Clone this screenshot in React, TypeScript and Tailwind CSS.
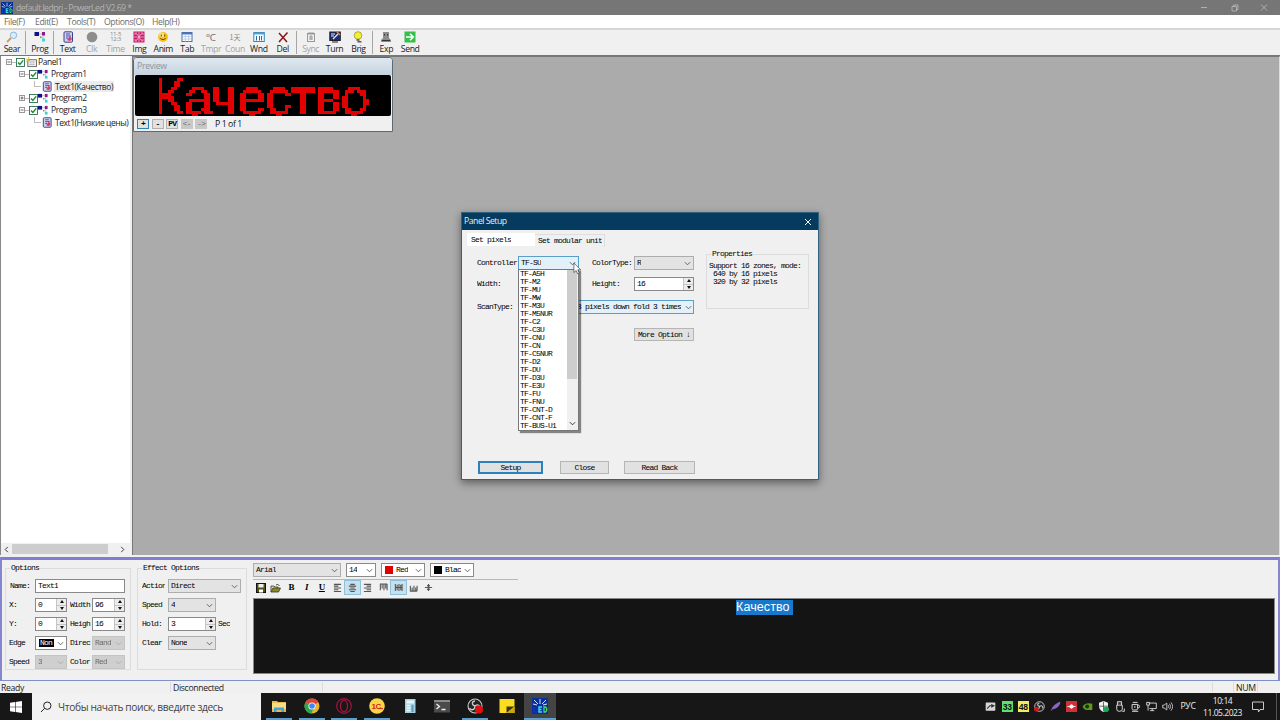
import { ReactNode } from "react";
import clsx from "clsx";

const mono = "font-['Liberation_Mono',monospace] text-[8px] leading-[8px] tracking-[-0.8px] whitespace-pre text-black";
const ui = "font-['Open_Sans','Noto_Sans',sans-serif] tracking-[-0.450px]";

function Chevron({ className = "text-[#555]" }: { className?: string }) {
  return (
    <svg viewBox="0 0 8 5" className={clsx("h-[5px] w-[7px] shrink-0", className)} fill="none" stroke="currentColor">
      <path d="M1 1l3 3 3-3" />
    </svg>
  );
}

function Select({ value, className, tone = "gray" }: { value: ReactNode; className: string; tone?: "gray" | "white" | "blue" | "off" }) {
  return (
    <div
      className={clsx(
        "flex h-[14px] shrink-0 items-center justify-between border pr-[2px] pl-[2px]",
        tone === "gray" && "border-[#adadad] bg-[#e3e3e3]",
        tone === "white" && "border-[#8a8a8a] bg-white",
        tone === "blue" && "border-[#5a9fc8] bg-[#e2f0f9]",
        tone === "off" && "border-[#c4c4c4] bg-[#cfcfcf]",
        className,
      )}
    >
      <span className={clsx(mono, "flex items-center overflow-hidden", tone === "off" && "opacity-50")}>{value}</span>
      <Chevron className={tone === "off" ? "text-[#aaa]" : "text-[#555]"} />
    </div>
  );
}

function Spinner({ value, className }: { value: string; className: string }) {
  return (
    <div className={clsx("flex h-[14px] shrink-0 items-center justify-between border border-[#8a8a8a] bg-white pl-[2px]", className)}>
      <span className={mono}>{value}</span>
      <div className="flex h-[12px] w-[10px] flex-col gap-px bg-[#c4c4c4] pl-px">
        <div className="flex flex-1 items-center justify-center bg-[#ececec]">
          <svg viewBox="0 0 4 3" className="h-[3px] w-[4px]"><path d="M0 3l2-3 2 3z" fill="#111" /></svg>
        </div>
        <div className="flex flex-1 items-center justify-center bg-[#ececec]">
          <svg viewBox="0 0 4 3" className="h-[3px] w-[4px]"><path d="M0 0l2 3 2-3z" fill="#111" /></svg>
        </div>
      </div>
    </div>
  );
}

function Label({ text, className }: { text: string; className?: string }) {
  return <span className={clsx(mono, "shrink-0 overflow-hidden", className)}>{text}</span>;
}

function LedIcon({ className }: { className?: string }) {
  return (
    <svg viewBox="0 0 16 16" className={className}>
      <rect width="16" height="16" fill="#0b2f9a" />
      <path d="M2 2l4 4M8 1v5M14 2l-4 4M1 6l4 1M15 6l-4 1" stroke="#cfe6ff" />
      <path d="M2 9v5h3" stroke="#1530c8" strokeWidth="1.5" fill="none" />
      <path d="M10 9H7v5h3M7 11.500h2.500" stroke="#35e0e0" strokeWidth="1.400" fill="none" />
      <path d="M12 9v5h1.500l1.200-1.500v-2L13.500 9z" stroke="#40e060" strokeWidth="1.300" fill="none" />
    </svg>
  );
}

function TextIcon({ className }: { className?: string }) {
  return (
    <svg viewBox="0 0 12 12" className={className}>
      <rect x="2" y="0.800" width="8.500" height="10.400" rx="1" fill="#cfd2ee" stroke="#3c3f8c" />
      <path d="M4 3h4M4 5h5M4 7h2" stroke="#4b4fa8" strokeWidth="1" />
      <path d="M5 9l3-4 2 3-2 2z" fill="#d0455e" />
    </svg>
  );
}

function ProgIcon({ className }: { className?: string }) {
  return (
    <svg viewBox="0 0 12 12" className={className}>
      <path d="M4 3h5M9 3v6" stroke="#999" strokeWidth="0.600" />
      <rect x="0.500" y="1" width="4.500" height="4" fill="#10108c" />
      <rect x="8" y="1" width="3" height="3.500" fill="#8b1a8b" />
      <rect x="8" y="7.500" width="3" height="3" fill="#48d0d8" />
      <rect x="6" y="5.500" width="1.500" height="1.500" fill="#777" />
    </svg>
  );
}

const toolIcons: Record<string, ReactNode> = {
  Sear: (
    <>
      <path d="M1 11l4-4" stroke="#d9935b" strokeWidth="1.800" />
      <circle cx="7.500" cy="4.300" r="3.200" fill="#d5efff" stroke="#8fb4d6" />
    </>
  ),
  Clk: <circle cx="6" cy="6" r="5.300" fill="#8d8d8d" />,
  Img: (
    <>
      <rect x="0.500" y="0.500" width="11" height="11" fill="#c81f68" />
      <path d="M1 3h3l2 3 2-3h3M1 9h3l2-3 2 3h3M3 1v2M9 1v2M3 11V9M9 11V9M1 6h10M6 1v10" stroke="#f4c4dc" strokeWidth="0.700" fill="none" />
    </>
  ),
  Anim: (
    <>
      <circle cx="6" cy="6" r="5" fill="#f6c021" />
      <circle cx="4.800" cy="4" r="2.500" fill="#fbe27a" />
      <path d="M4.300 3.500v2M7.700 3.500v2M3.300 7.500q2.700 2.500 5.400 0" stroke="#5c3a00" fill="none" strokeWidth="0.900" />
    </>
  ),
  Tab: (
    <>
      <rect x="1" y="1.500" width="10" height="9" fill="#fff" stroke="#4b6ba5" />
      <path d="M1 2.500h10" stroke="#4b76c0" strokeWidth="2" />
      <path d="M1 5.500h10M1 8h10M4.300 3v8M7.700 3v8" stroke="#a9bddb" strokeWidth="0.700" />
    </>
  ),
  Wnd: (
    <>
      <rect x="0.800" y="1.500" width="10.500" height="9" fill="#f4fafe" stroke="#3a87b8" />
      <path d="M1 2.500h10" stroke="#4ba3d0" strokeWidth="1.800" />
      <path d="M3.500 5v4.500M6.500 5v4.500M8.500 5v4.500" stroke="#2f6c9e" strokeWidth="1" />
    </>
  ),
  Del: <path d="M2 2l8 9M10.500 1.500L2 11" stroke="#8c1414" strokeWidth="1.500" />,
  Sync: (
    <>
      <rect x="2.500" y="2.500" width="7" height="8" fill="none" stroke="#999" />
      <path d="M4 1v3M6 1v8M8 1v3M4 6h4M4 8h4" stroke="#999" />
    </>
  ),
  Turn: (
    <>
      <rect x="0.800" y="1" width="10.500" height="8.500" fill="#142a8c" stroke="#222" />
      <path d="M2 3h4M2 5h3M4 8l5-5" stroke="#f4f0c0" strokeWidth="1.200" />
      <path d="M8 1l3 3" stroke="#e08830" strokeWidth="1.500" />
      <path d="M3 11h6" stroke="#444" strokeWidth="1.200" />
    </>
  ),
  Brig: (
    <>
      <circle cx="6" cy="4.500" r="3.800" fill="#f2ee3c" stroke="#8f8d1c" strokeWidth="0.700" />
      <path d="M4.500 9h3" stroke="#556" strokeWidth="1.600" />
      <path d="M5.500 10.800h4" stroke="#333" strokeWidth="1.200" />
    </>
  ),
  Exp: (
    <>
      <path d="M3 1h6v6l2 2v2H1V9l2-2z" fill="#8c8c8c" />
      <path d="M4.500 3v1.500M7.500 3v1.500M2 9.500h8" stroke="#333" />
    </>
  ),
  Send: (
    <>
      <rect x="0.500" y="0.500" width="11" height="11" fill="#35c04a" />
      <path d="M2 6h7M6 2.800L9.300 6 6 9.200" stroke="#fff" strokeWidth="1.500" fill="none" />
    </>
  ),
};

function ToolButton({ name, off }: { name: string; off?: boolean }) {
  let icon: ReactNode;
  if (name === "Prog") icon = <ProgIcon className="h-[12px] w-[12px]" />;
  else if (name === "Text") icon = <TextIcon className="h-[12px] w-[12px]" />;
  else if (name === "Time") icon = <span className="text-center text-[6px] leading-[5px] tracking-[-0.3px] text-[#888]">11-5<br />12:3</span>;
  else if (name === "Tmpr") icon = <span className="text-[10px] leading-none tracking-normal text-[#777]">℃</span>;
  else if (name === "Coun") icon = <span className="font-['Noto_Sans_CJK_SC',sans-serif] text-[7px] leading-none tracking-normal text-[#888]">1天</span>;
  else icon = <svg viewBox="0 0 12 12" className="h-[12px] w-[12px]">{toolIcons[name]}</svg>;
  return (
    <div className="flex w-[23.9px] shrink-0 flex-col items-center">
      <div className="flex h-[12px] items-center justify-center">{icon}</div>
      <span className={clsx("text-[8.7px] leading-[12px]", name.length === 4 ? "tracking-[-0.4px]" : "tracking-[-0.3px]", off ? "text-[#a3a3a3]" : "text-[#1a1a1a]")}>{name}</span>
    </div>
  );
}

function ToolSep() {
  return (
    <div className="flex w-[4px] shrink-0 justify-center">
      <div className="h-[23px] w-px bg-[#a5a5a5]" />
    </div>
  );
}

function Check() {
  return (
    <svg viewBox="0 0 10 10" className="h-[9px] w-[9px] shrink-0">
      <rect x="0.600" y="0.600" width="8.800" height="8.800" fill="#fff" stroke="#2c6e4c" strokeWidth="1" />
      <path d="M2.300 5l2 2.200L8 2.600" fill="none" stroke="#1d8a30" strokeWidth="1.600" />
    </svg>
  );
}

function Expander({ open }: { open: boolean }) {
  return (
    <svg viewBox="0 0 6 6" className="h-[6px] w-[6px] shrink-0">
      <rect x="0.500" y="0.500" width="5" height="5" fill="#fff" stroke="#999" />
      <path d={open ? "M1.500 3h3" : "M1.500 3h3M3 1.500v3"} stroke="#444" strokeWidth="0.800" />
    </svg>
  );
}

function Program({ name, open }: { name: string; open: boolean }) {
  return (
    <div className="flex h-[12px] items-center pl-[18px]">
      <Expander open={open} />
      <div className="w-[4px] border-t border-[#bbb]" />
      <Check />
      <ProgIcon className="-ml-px h-[11px] w-[12px] shrink-0" />
      <span className="ml-[2px]">{name}</span>
    </div>
  );
}

function TextNode({ name, selected }: { name: string; selected?: boolean }) {
  return (
    <div className="flex h-[12px] items-center pl-[33px]">
      <div className="mb-[5px] h-[6px] w-[7px] shrink-0 border-b border-l border-[#bbb]" />
      <TextIcon className="h-[11px] w-[12px] shrink-0" />
      <span className={clsx("ml-[1px] whitespace-nowrap px-[1px] leading-[11px]", selected && "bg-[#ececec]")}>{name}</span>
    </div>
  );
}

function Group({ title, className, children }: { title: string; className: string; children: ReactNode }) {
  return (
    <div className={clsx("relative border border-[#dcdcdc]", className)}>
      <span className={clsx(mono, "absolute -top-[5px] left-[4px] bg-[#f0f0f0] px-[1px]")}>{title}</span>
      {children}
    </div>
  );
}

const controllers = [
  "TF-A5H", "TF-M2", "TF-MU", "TF-MW", "TF-M3U", "TF-M5NUR", "TF-C2", "TF-C3U", "TF-CNU", "TF-CN",
  "TF-C5NUR", "TF-D2", "TF-DU", "TF-D3U", "TF-E3U", "TF-FU", "TF-FNU", "TF-CNT-D", "TF-CNT-F", "TF-BUS-U1",
];

function DialogButton({ text, className }: { text: string; className: string }) {
  return (
    <div className={clsx("flex h-[13px] items-center justify-center bg-[#e1e1e1]", className)}>
      <span className={mono}>{text}</span>
    </div>
  );
}

function PanelSetup() {
  return (
    <div className="absolute top-[212px] left-[461px] flex h-[268px] w-[358px] flex-col border border-[#33627c] bg-[#f0f0f0] shadow-[0_3px_8px_rgba(0,0,0,0.45)]">
      <div className="flex h-[17px] shrink-0 items-center justify-between bg-[#063b60] pr-[6px] pl-[2px]">
        <span className="text-[8.7px] leading-none tracking-[-0.5px] text-[#e4edf3]">Panel Setup</span>
        <svg viewBox="0 0 8 8" className="h-[8px] w-[8px]" stroke="#fff" strokeWidth="1"><path d="M1 1l6 6M7 1L1 7" /></svg>
      </div>
      <div className="mt-[3px] flex h-[15px] shrink-0 pl-[5px]">
        <div className="flex h-[13px] w-[68px] items-center bg-white pl-[4px]"><Label text="Set pixels" /></div>
        <div className="mt-[1px] flex h-[13px] w-[70px] items-center border-t border-r border-[#dedede] pl-[3px]"><Label text="Set modular unit" /></div>
      </div>
      <div className="flex pt-[8px] pl-[15px]">
        <div className="flex w-[218px] flex-col">
          <div className="flex h-[14px] items-center">
            <Label text="Controller" className="w-[41px]" />
            <Select value="TF-SU" tone="blue" className="w-[61px]" />
            <Label text="ColorType:" className="ml-[13px] w-[42px]" />
            <Select value="R" className="w-[60px]" />
          </div>
          <div className="mt-[7px] flex h-[14px] items-center">
            <Label text="Width:" className="w-[115px]" />
            <Label text="Height:" className="w-[42px]" />
            <Spinner value="16" className="w-[60px]" />
          </div>
          <div className="mt-[9px] flex h-[14px] items-center">
            <Label text="ScanType:" className="w-[41px]" />
            <div className="flex h-[14px] w-[176px] items-center justify-end gap-[4px] border border-[#5a9fc8] bg-[#e2f0f9] pr-[1px]">
              <Label text="8 pixels down fold 3 times" />
              <Chevron />
            </div>
          </div>
          <DialogButton text="More Option ↓" className="mt-[14px] ml-[157px] w-[60px] border border-[#b5b5b5]" />
        </div>
        <div className="mt-[-2px] ml-[11px]">
          <Group title="Properties" className="h-[55px] w-[103px] pt-[7px] pl-[2px]">
            <p className={mono}>Support 16 zones, mode:</p>
            <p className={mono}> 640 by 16 pixels</p>
            <p className={mono}> 320 by 32 pixels</p>
          </Group>
        </div>
      </div>
      <div className="mt-auto mb-[5px] flex pl-[16px]">
        <DialogButton text="Setup" className="w-[65px] border-2 border-[#2f81bd]" />
        <DialogButton text="Close" className="ml-[17px] w-[49px] border border-[#b5b5b5]" />
        <DialogButton text="Read Back" className="ml-[15px] w-[71px] border border-[#b5b5b5]" />
      </div>
      <div className="absolute top-[56px] left-[56px] flex h-[162px] w-[61px] border border-[#777] bg-white shadow-[2px_2px_1px_rgba(0,0,0,0.45)]">
        <div className="flex-1 pl-[1px]">
          {controllers.map((c) => (
            <div key={c} className={mono}>{c}</div>
          ))}
        </div>
        <div className="flex w-[11px] flex-col bg-[#f0f0f0]">
          <div className="h-[109px] w-[10px] bg-[#cdcdcd]" />
          <div className="mt-auto mb-[4px] ml-[2px]"><Chevron className="text-[#222]" /></div>
        </div>
      </div>
      <svg viewBox="0 0 10 14" className="absolute top-[49px] left-[111px] h-[13px] w-[9px]">
        <path d="M1 1v10.500l2.500-2.300L5.200 13l1.800-.8-1.700-3.700h3.400z" fill="#fff" stroke="#333" strokeWidth="0.700" />
      </svg>
    </div>
  );
}

function PreviewWindow() {
  const btn = "flex h-[10px] w-[12px] items-center justify-center";
  return (
    <div className="absolute top-[57px] left-[133px] flex h-[75px] w-[260px] flex-col rounded-t-[4px] border border-[#5c6a74] bg-[#f0f0f0]">
      <div className="flex h-[17px] shrink-0 items-center rounded-t-[3px] bg-linear-to-b from-[#dfe8f0] to-[#c5d3df] pl-[3px]">
        <span className="text-[8.7px] leading-none tracking-[-0.3px] text-[#8b959e]">Preview</span>
      </div>
      {/* led dots: sample the text once per 3px cell */}
      <svg className="ml-px h-[41px] w-[256px] shrink-0 rounded-[2px] bg-black">
        <filter id="dots" x="0" y="0" width="256" height="41" filterUnits="userSpaceOnUse" colorInterpolationFilters="sRGB">
          <feFlood x="1" y="1" width="1" height="1" />
          <feComposite width="3" height="3" x="0" y="0" />
          <feTile x="0" y="0" width="256" height="41" result="grid" />
          <feComposite in="SourceGraphic" in2="grid" operator="in" />
          <feMorphology operator="dilate" radius="1" />
          <feComponentTransfer>
            <feFuncA type="discrete" tableValues="0 1" />
          </feComponentTransfer>
        </filter>
        <g filter="url(#dots)">
          <text x="19" y="39.500" textLength="215" lengthAdjust="spacingAndGlyphs" fontSize="52" fontFamily="Liberation Sans" fill="#e30000" stroke="#e30000" strokeWidth="0.600">Качество</text>
        </g>
      </svg>
      <div className="flex flex-1 items-center gap-[2.600px] pl-[3px]">
        <div className={clsx(btn, "border border-[#2f81bd] bg-[#e1e1e1]")}><b className={mono}>+</b></div>
        <div className={clsx(btn, "border border-[#b0b0b0] bg-[#e1e1e1]")}><b className={mono}>-</b></div>
        <div className={clsx(btn, "border border-[#b0b0b0] bg-[#e1e1e1]")}><b className={mono}>PV</b></div>
        <div className={clsx(btn, "bg-[#c8c8c8]")}><span className={clsx(mono, "opacity-50")}>&lt;-</span></div>
        <div className={clsx(btn, "bg-[#c8c8c8]")}><span className={clsx(mono, "opacity-50")}>-&gt;</span></div>
        <span className="mt-px ml-[5px] text-[8.7px] leading-none tracking-[-0.4px] text-[#111]">P 1 of 1</span>
      </div>
    </div>
  );
}

function AlignIcon({ d }: { d: string }) {
  return <svg viewBox="0 0 10 10" className="h-[9px] w-[9px]" stroke="#555" strokeWidth="1.200" fill="none"><path d={d} /></svg>;
}

function FormatBar() {
  const serif = "font-['Liberation_Serif',serif] text-[9px] font-bold leading-none text-black";
  const items: { node: ReactNode; on?: boolean }[] = [
    { node: <svg viewBox="0 0 10 10" className="h-[10px] w-[10px]"><rect x="0.500" y="0.500" width="9" height="9" fill="#4f5315" stroke="#111" /><rect x="2.500" y="1" width="5" height="3.500" fill="#eee" /><rect x="3" y="6.500" width="4" height="3" fill="#fff" /></svg> },
    { node: <svg viewBox="0 0 11 10" className="h-[10px] w-[11px]"><path d="M1 9V3h3l1 1h3v2" fill="#e8e07a" stroke="#333" strokeWidth="0.800" /><path d="M1 9l2-4h7.500l-2 4z" fill="#8a8a1e" stroke="#333" strokeWidth="0.800" /><path d="M6 2q2-2 3.500 1" fill="none" stroke="#222" strokeWidth="0.800" /></svg> },
    { node: <span className={serif}>B</span> },
    { node: <span className={clsx(serif, "italic")}>I</span> },
    { node: <span className={clsx(serif, "underline")}>U</span> },
    { node: <AlignIcon d="M1 1.500h8M1 3.500h5M1 5.500h8M1 7.500h5M1 9.400h8" /> },
    { node: <AlignIcon d="M2.500 1.500h5M1 3.500h8M2.500 5.500h5M1 7.500h8M2.500 9.400h5" />, on: true },
    { node: <AlignIcon d="M1 1.500h8M4 3.500h5M1 5.500h8M4 7.500h5M1 9.400h8" /> },
    { node: <AlignIcon d="M1 1.200h8M1.500 1v7M3.500 1v5M5.500 1v7M7.500 1v5M9 1v7" /> },
    { node: <AlignIcon d="M1 5h8M1.500 1v8M3.500 2v6M5.500 1v8M7.500 2v6M9 1v8" />, on: true },
    { node: <AlignIcon d="M1 9h8M1.500 3v6M3.500 5v4M5.500 3v6M7.500 5v4M9 3v6" /> },
    { node: <AlignIcon d="M1 5h8M5 1v3M5 6v3M3.500 2.500L5 4l1.500-1.500M3.500 7.500L5 6l1.500 1.500" /> },
  ];
  return (
    <div className="flex h-[17px] w-[265px] items-center border-t border-[#b8b8b8]">
      {items.map((it, i) => (
        <div
          key={i}
          className={clsx("-mt-px flex h-[13px] w-[15.3px] shrink-0 items-center justify-center", it.on && "bg-[#c6e0ee] outline-[0.5px] outline-[#8fc0dc]")}
        >
          {it.node}
        </div>
      ))}
    </div>
  );
}

function Editor() {
  return (
    <div className="flex h-[124px] shrink-0 border-t-[3px] border-r-2 border-b border-l-2 border-t-[#7f7fd0] border-r-[#8686d0] border-b-[#7f8fc8] border-l-[#8686d0] bg-[#f0f0f0]">
      <Group title="Options" className="mt-[8px] ml-[3px] h-[102px] w-[126px] pl-[3px]">
        <div className="flex flex-col gap-[5px] pt-[10px]">
          <div className="flex h-[14px] items-center">
            <Label text="Name:" className="w-[26px] pl-[1px]" />
            <div className="flex h-[14px] w-[90px] items-center border border-[#8a8a8a] bg-white pl-[2px]"><Label text="Text1" /></div>
          </div>
          <div className="flex h-[14px] items-center">
            <Label text="X:" className="w-[26px]" />
            <Spinner value="0" className="w-[32px]" />
            <Label text="Width" className="ml-[3px] w-[22px]" />
            <Spinner value="96" className="w-[33px]" />
          </div>
          <div className="flex h-[14px] items-center">
            <Label text="Y:" className="w-[26px]" />
            <Spinner value="0" className="w-[32px]" />
            <Label text="Heigh" className="ml-[3px] w-[22px]" />
            <Spinner value="16" className="w-[33px]" />
          </div>
          <div className="flex h-[14px] items-center">
            <Label text="Edge" className="w-[26px]" />
            <Select value={<span className="ml-[1px] w-[15px] overflow-hidden bg-black pl-[1px] text-white">Non</span>} tone="white" className="w-[32px]" />
            <Label text="Direc" className="ml-[3px] w-[22px]" />
            <Select value="Rand" tone="off" className="w-[33px]" />
          </div>
          <div className="flex h-[14px] items-center">
            <Label text="Speed" className="w-[26px]" />
            <Select value="3" tone="off" className="w-[32px]" />
            <Label text="Color" className="ml-[3px] w-[22px]" />
            <Select value="Red" tone="off" className="w-[33px]" />
          </div>
        </div>
      </Group>
      <Group title="Effect Options" className="mt-[8px] ml-[6px] h-[102px] w-[110px] pl-[4px]">
        <div className="flex flex-col gap-[5px] pt-[10px]">
          <div className="flex h-[14px] items-center"><Label text="Action" className="w-[23px]" /><Select value="Direct" className="ml-[3px] w-[73px]" /></div>
          <div className="flex h-[14px] items-center"><Label text="Speed" className="w-[26px]" /><Select value="4" className="w-[48px]" /></div>
          <div className="flex h-[14px] items-center"><Label text="Hold:" className="w-[26px]" /><Spinner value="3" className="w-[48px]" /><Label text="Sec" className="ml-[2px]" /></div>
          <div className="flex h-[14px] items-center"><Label text="Clear" className="w-[26px]" /><Select value="None" className="w-[48px]" /></div>
        </div>
      </Group>
      <div className="ml-[6px] flex flex-1 flex-col pt-[3px] pr-[3px]">
        <div className="flex h-[16px] gap-[5px]">
          <Select value="Arial" className="w-[88px]" />
          <Select value="14" tone="white" className="w-[30px]" />
          <Select value={<><span className="mr-[3px] ml-[1px] size-[8px] bg-[#e00000]" />Red</>} tone="white" className="w-[44px]" />
          <Select value={<><span className="mr-[3px] ml-[1px] size-[8px] bg-black" />Blac</>} tone="white" className="w-[44px]" />
        </div>
        <FormatBar />
        <div className="mt-[2px] flex h-[76px] items-start justify-center border border-[#888] bg-[#141414] pt-[1px] pl-[1px]">
          <span className="h-[15px] w-[57px] bg-[#1878cc] font-['Liberation_Sans',sans-serif] text-[12.5px] leading-[15px] tracking-[0.1px] whitespace-nowrap text-white">Качество</span>
        </div>
      </div>
    </div>
  );
}

const apps: { icon: ReactNode; running?: boolean; active?: boolean }[] = [
  { running: true, icon: <><path d="M1 3h5l1 1h8v10H1z" fill="#e9b94c" /><rect x="1" y="5" width="14" height="6" fill="#f7dc86" /><path d="M3 14V9.500h10V14h-2.500v-2h-5v2z" fill="#4a9fd8" /></> },
  { running: true, icon: <><circle cx="8" cy="8" r="7.500" fill="#e2b52a" /><path d="M8 8L1.500 4.300A7.500 7.500 0 0 1 14.500 4.300z" fill="#dc4437" /><path d="M8 8L1.500 4.300A7.500 7.500 0 0 0 7 15.500l3-5.500z" fill="#2fa351" /><circle cx="8" cy="8" r="3.600" fill="#fff" /><circle cx="8" cy="8" r="2.800" fill="#4285f4" /></> },
  { running: true, icon: <><circle cx="8" cy="8" r="7.300" fill="none" stroke="#a3143f" strokeWidth="1.200" /><ellipse cx="8" cy="8" rx="3.500" ry="5.800" fill="none" stroke="#a3143f" strokeWidth="1.300" /></> },
  { running: true, icon: <><circle cx="8" cy="8" r="7.800" fill="#f8d648" /><text x="2.600" y="11" fontSize="8" fontWeight="bold" fontFamily="Liberation Sans" fill="#d3281f" letterSpacing="-0.500">1C</text><path d="M9 10.600h5" stroke="#d3281f" strokeWidth="1" /></> },
  { icon: <><rect x="3" y="1" width="10.500" height="14" fill="#a6cfe0" /><rect x="4.500" y="2.500" width="7.500" height="3" fill="#e6f5fa" /><path d="M4.500 7.500h4M4.500 10h4M4.500 12.500h4" stroke="#eef8fb" strokeWidth="1.500" /><path d="M10.500 7v7" stroke="#5b9bbb" strokeWidth="2" /></> },
  { icon: <><rect x="0" y="2" width="16" height="12.500" fill="#4a4a4a" /><rect x="0" y="2" width="16" height="2" fill="#8a8a8a" /><path d="M2.500 6l3 2.500-3 2.500M7.500 11.500h4" fill="none" stroke="#eee" strokeWidth="1.300" /></> },
  { running: true, icon: <><circle cx="8" cy="8" r="7" fill="#222" stroke="#ccc" strokeWidth="1.100" /><path d="M8 8c-4-1-3-5 0-5M8 8c3-2.500 6 0 4.500 3M8 8c0 4-4 5-5.500 2" fill="none" stroke="#ccc" strokeWidth="1.300" /><circle cx="12" cy="11.500" r="4" fill="#e01010" /></> },
  { icon: <><rect x="0.500" y="1" width="15" height="14" fill="#fbdd20" /><path d="M7.500 15V8.500h8z" fill="#3a3622" /><path d="M8 15l7.500-6.500V15z" fill="#c9a80e" /></> },
  { running: true, active: true, icon: null },
];

const tray: ReactNode[] = [
  <><rect x="1" y="2" width="14" height="12" rx="1" fill="#d6d6d6" /><path d="M3 11l4-4h5M9 5l4 2-4 2" stroke="#333" strokeWidth="1.500" fill="none" /></>,
  <><rect x="0" y="0" width="16" height="16" fill="#5be36a" /><text x="1.200" y="12.500" fontSize="12.500" fontWeight="bold" fontFamily="Liberation Sans" fill="#111">33</text></>,
  <><rect x="0" y="0" width="16" height="16" fill="#f1ec5e" /><text x="1.200" y="12.500" fontSize="12.500" fontWeight="bold" fontFamily="Liberation Sans" fill="#111">48</text></>,
  <><circle cx="8" cy="8" r="7" fill="#222" stroke="#ccc" strokeWidth="1.300" /><path d="M8 8c-4-1-3-5 0-5M8 8c3-2.500 6 0 4.500 3M8 8c0 4-4 5-5.500 2" fill="none" stroke="#ccc" strokeWidth="1.600" /><circle cx="3.500" cy="12" r="3.500" fill="#d01818" /></>,
  <path d="M1 15C3 8 8 3 15 1c0 6-5 10-11 11z" fill="#8a66c4" />,
  <><rect width="16" height="16" fill="#d32f36" /><circle cx="8" cy="8" r="3" fill="#fff" /><path d="M2 8h12M8 5v6" stroke="#fff" strokeWidth="1.200" /></>,
  <><path d="M1 8c3-6 10-5 14-4v9H7c-3 0-5-2-6-5z" fill="#5f9a1e" /><circle cx="7.500" cy="8" r="2.800" fill="#1b2b0c" /></>,
  <><path d="M8 0l6.500 2.500v5C14.500 12 11 15 8 16 5 15 1.500 12 1.500 7.500v-5z" fill="#f2f2f2" /><path d="M8 1v14M2 7.500h12" stroke="#333" strokeWidth="1" /><circle cx="12" cy="12" r="4" fill="#20a860" /></>,
  <path d="M5 6V1h6v5M4 6h8v6q0 3-4 3t-4-3zM6.500 3h1M8.500 3h1M12 15h3v-4" fill="none" stroke="#ddd" strokeWidth="1.400" />,
  <path d="M3 5h8v6q0 2-2 2H5q-2 0-2-2zM11 6h2q2 2 0 4h-2M4 2h7M3 15h9M7 7v3" fill="none" stroke="#ddd" strokeWidth="1.400" />,
  <path d="M4 3h11v8H5M9 11v3M6 14h6M1 2h4v4H1zM3 6v8" fill="none" stroke="#ddd" strokeWidth="1.300" />,
  <path d="M1 6h2l4-3v10L3 10H1zM9 6q1.500 2 0 4M11 4q3 4 0 8M13 2q5 6 0 12" fill="none" stroke="#ddd" strokeWidth="1.200" />,
];

function Taskbar() {
  return (
    <div className="flex h-[27px] shrink-0 bg-[#171717]">
      <div className="flex w-[32px] items-center justify-center">
        <svg viewBox="0 0 12 12" className="h-[12px] w-[12px]" fill="#fff"><path d="M0 1.700l5-.7v4.700H0zM5.600.900L12 0v5.700H5.600zM0 6.300h5V11l-5-.7zM5.600 6.300H12V12l-6.400-.9z" /></svg>
      </div>
      <div className="flex w-[229px] items-center bg-[#f2f2f2] pl-[8px]">
        <svg viewBox="0 0 12 12" className="h-[12px] w-[12px]" fill="none" stroke="#222" strokeWidth="1"><circle cx="7.300" cy="4.700" r="3.700" /><path d="M4.600 7.400L1 11" /></svg>
        <span className="mt-px ml-[6px] whitespace-nowrap text-[10.2px] leading-none tracking-[-0.350px] text-[#444]">Чтобы начать поиск, введите здесь</span>
      </div>
      <div className="ml-[2px] flex">
        {apps.map((a, i) => (
          <div key={i} className={clsx("flex w-[32.6px] flex-col items-center", a.active && "bg-[#444]")}>
            <div className="flex flex-1 items-center">
              {a.icon ? <svg viewBox="0 0 16 16" className="h-[16px] w-[16px]">{a.icon}</svg> : <LedIcon className="h-[16px] w-[16px]" />}
            </div>
            <div className={clsx("h-[2px]", a.running && "bg-[#5b9fd0]", a.active ? "w-full" : "w-[26px]")} />
          </div>
        ))}
      </div>
      <div className="ml-auto flex items-center text-[#eee]">
        {tray.map((t, i) => (
          <div key={i} className="flex w-[16.1px] justify-center">
            <svg viewBox="0 0 16 16" className="h-[11px] w-[11px]">{t}</svg>
          </div>
        ))}
        <span className="w-[24px] text-center text-[8.7px] tracking-[-0.3px]">РУС</span>
        <div className="w-[45px] text-center text-[8.5px] leading-[12px]">
          <div>10:14</div>
          <div>11.05.2023</div>
        </div>
        <svg viewBox="0 0 12 12" className="ml-[7px] h-[12px] w-[12px]" fill="none" stroke="#ddd" strokeWidth="0.900"><path d="M0.500 1h11v7.500H8L6.500 11 6.300 8.500H.500z" /></svg>
        <div className="ml-[12px] h-[27px] w-[4px] border-l border-[#555]" />
      </div>
    </div>
  );
}

export default function App() {
  return (
    <div className={clsx(ui, "relative flex h-[720px] w-[1280px] flex-col overflow-hidden bg-[#f0f0f0]")}>
      <div className="flex h-[15px] shrink-0 items-center bg-[#767676] pl-[1px]">
        <LedIcon className="h-[12px] w-[12px]" />
        <span className="mt-px ml-[3px] text-[8.7px] leading-none tracking-[-0.550px] text-[#b4b4b4]">default.ledprj - PowerLed V2.69 *</span>
        <svg viewBox="0 0 70 9" className="mr-[10px] ml-auto h-[9px] w-[70px]" fill="none" stroke="#b5b5b5" strokeWidth="0.900">
          <path d="M1 4.500h6M32 3.500h4.500V8H32zM33.500 3.500V2H38v4.500h-1.500M61 1.500l6 6M67 1.500l-6 6" />
        </svg>
      </div>
      <div className="flex h-[13px] shrink-0 items-center bg-white pt-px pl-[4px] text-[8.7px] leading-none tracking-[-0.4px] text-[#6c6c6c]">
        <span className="w-[31px]">File(F)</span>
        <span className="w-[32px]">Edit(E)</span>
        <span className="w-[37px]">Tools(T)</span>
        <span className="w-[48px]">Options(O)</span>
        <span>Help(H)</span>
      </div>
      <div className="flex h-[28px] shrink-0 items-start border-t-2 border-b border-t-[#d6d6d6] border-b-[#777] bg-[#f0f0f0] pt-[1px]">
        <ToolButton name="Sear" />
        <ToolSep />
        <ToolButton name="Prog" />
        <ToolSep />
        <ToolButton name="Text" />
        <ToolButton name="Clk" off />
        <ToolButton name="Time" off />
        <ToolButton name="Img" />
        <ToolButton name="Anim" />
        <ToolButton name="Tab" />
        <ToolButton name="Tmpr" off />
        <ToolButton name="Coun" off />
        <ToolButton name="Wnd" />
        <ToolButton name="Del" />
        <ToolSep />
        <ToolButton name="Sync" off />
        <ToolButton name="Turn" />
        <ToolButton name="Brig" />
        <ToolSep />
        <ToolButton name="Exp" />
        <ToolButton name="Send" />
      </div>
      <div className="flex h-[501px] shrink-0 bg-[#f0f0f0] pb-[2px]">
        <div className="flex w-[130px] flex-col overflow-hidden border-l border-[#888] bg-white text-[8.5px] leading-none text-[#1a1a1a]">
          <div className="flex h-[12px] items-center pl-[5px]">
            <Expander open />
            <div className="w-[4px] border-t border-[#bbb]" />
            <Check />
            <svg viewBox="0 0 12 12" className="ml-[1px] h-[11px] w-[11px] shrink-0">
              <rect x="2" y="3" width="9.500" height="7.500" fill="#eee" stroke="#555" strokeWidth="0.900" />
              <path d="M4 5.500h6M4 8h6" stroke="#777" strokeDasharray="1 1" />
              <path d="M0 2l4 2M3 0v4M0 5l3-2" stroke="#d8c21c" />
            </svg>
            <span className="ml-[1px]">Panel1</span>
          </div>
          <Program name="Program1" open />
          <TextNode name="Text1(Качество)" selected />
          <Program name="Program2" open={false} />
          <Program name="Program3" open />
          <TextNode name="Text1(Низкие цены)" />
          <div className="mt-auto flex h-[12px] items-center bg-[#f0f0f0] pl-[2px]">
            <Chevron className="rotate-90 text-[#222]" />
            <div className="ml-[2px] h-[10px] w-[96px] bg-[#cdcdcd]" />
            <Chevron className="ml-[11px] -rotate-90 text-[#222]" />
          </div>
        </div>
        <div className="ml-[2px] flex-1 border-t border-r border-l border-[#777] border-r-[#ddd] bg-[#ababab]" />
      </div>
      <Editor />
      <div className="flex h-[12px] shrink-0 items-center bg-[#f0f0f0] text-[8.7px] leading-[13px] tracking-[-0.350px] text-[#222]">
        <span className="h-[10px] w-[170px] pl-[1px]">Ready</span>
        <span className="h-[10px] w-[152px] border-l border-[#dcdcdc] pl-[2px]">Disconnected</span>
        <span className="h-[10px] flex-1 border-l border-[#dcdcdc]" />
        <span className="h-[10px] w-[21px] border-l border-[#dcdcdc]" />
        <span className="h-[10px] w-[24px] border-l border-[#dcdcdc] pl-[2px]">NUM</span>
        <span className="h-[10px] w-[23px] border-l border-[#dcdcdc]" />
      </div>
      <PreviewWindow />
      <PanelSetup />
      <Taskbar />
    </div>
  );
}
